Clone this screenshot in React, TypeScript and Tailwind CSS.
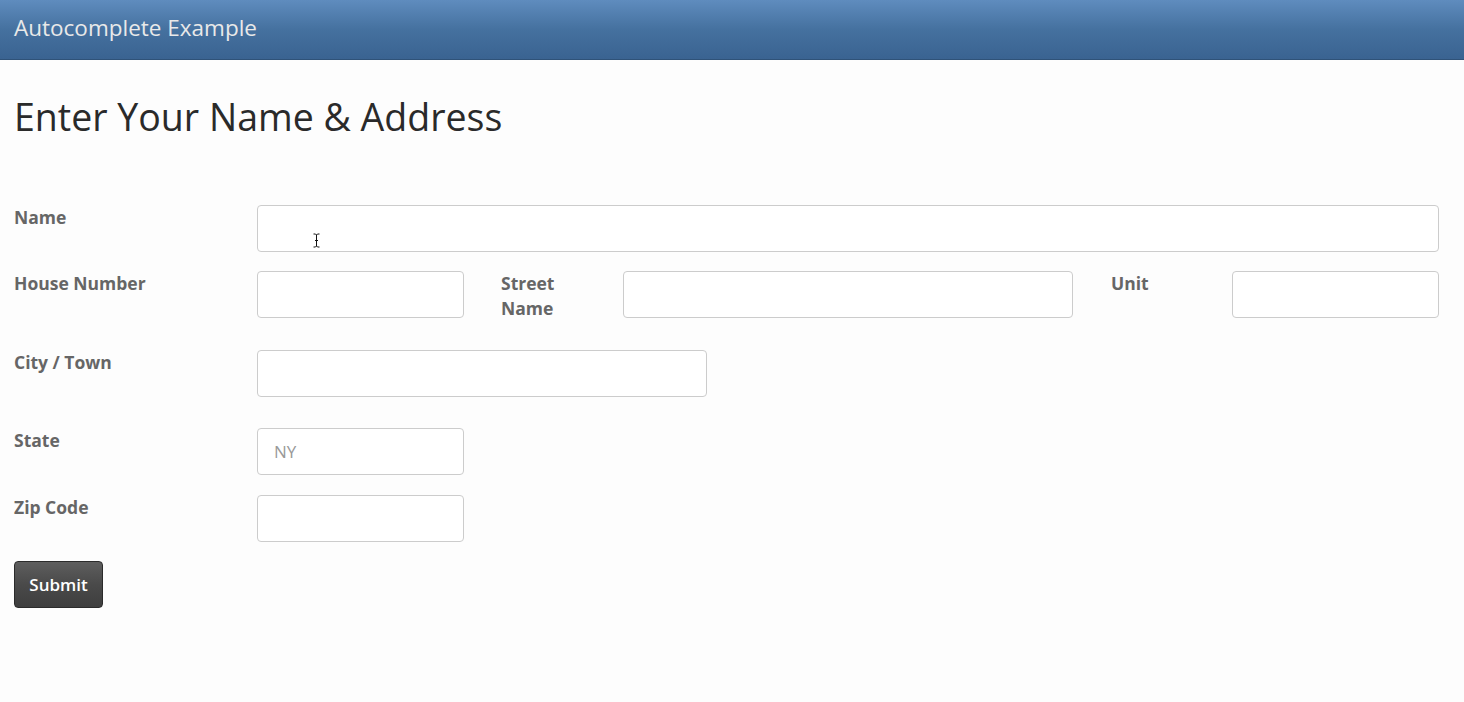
import React from "react";

const inputCls =
  "block h-[47px] rounded-[4px] border border-[#cccccc] bg-white px-4 text-[17px] text-[#555] outline-none placeholder:text-[#999]";
const labelCls = "text-[17.5px] font-bold leading-[25px] text-[#666666]";

export default function App() {
  return (
    <div
      className="min-h-[702px] w-full bg-[#fdfdfd]"
      style={{ fontFamily: '"Open Sans", "Liberation Sans", sans-serif' }}
    >
      <header className="flex h-[60px] items-center border-b border-[#2f5278] bg-gradient-to-b from-[#5f8cbe] via-[#45719f] to-[#3a6391] px-[14px]">
        <span className="text-[22.5px] leading-none text-[#e9e9e9] -mt-[3px]">Autocomplete Example</span>
      </header>

      <main className="px-[14px]">
        <h1 className="mt-[34px] text-[37.5px] font-normal leading-[46px] text-[#2a2a2a]">
          Enter Your Name &amp; Address
        </h1>

        <form className="mt-[65px]" onSubmit={(e) => e.preventDefault()}>
          {/* Name */}
          <div className="flex">
            <label className={`${labelCls} w-[243px] shrink-0`}>Name</label>
            <div className="relative">
              <input className={`${inputCls} w-[1182px]`} />
              <svg
                className="pointer-events-none absolute left-[56px] top-[28px]"
                width="7"
                height="15"
                viewBox="0 0 7 15"
              >
                <path d="M0.5 1 H2.5 L3.5 2 L4.5 1 H6.5 M3.5 2 V13 M0.5 14 H2.5 L3.5 13 L4.5 14 H6.5 M2 7.5 H5" stroke="#111" strokeWidth="1" fill="none" />
              </svg>
            </div>
          </div>

          {/* House / Street / Unit */}
          <div className="mt-[19px] flex">
            <label className={`${labelCls} w-[243px] shrink-0`}>House Number</label>
            <input className={`${inputCls} w-[207px]`} />
            <label className={`${labelCls} ml-[37px] w-[122px] shrink-0`}>
              Street
              <br />
              Name
            </label>
            <input className={`${inputCls} w-[450px]`} />
            <label className={`${labelCls} ml-[38px] w-[121px] shrink-0`}>Unit</label>
            <input className={`${inputCls} w-[207px]`} />
          </div>

          {/* City */}
          <div className="mt-[29px] flex">
            <label className={`${labelCls} w-[243px] shrink-0`}>City / Town</label>
            <input className={`${inputCls} w-[450px]`} />
          </div>

          {/* State */}
          <div className="mt-[31px] flex">
            <label className={`${labelCls} w-[243px] shrink-0`}>State</label>
            <input className={`${inputCls} w-[207px]`} placeholder="NY" />
          </div>

          {/* Zip */}
          <div className="mt-[20px] flex">
            <label className={`${labelCls} w-[243px] shrink-0`}>Zip Code</label>
            <input className={`${inputCls} w-[207px]`} />
          </div>

          <button
            type="submit"
            className="mt-[19px] h-[47px] w-[89px] rounded-[4px] border border-[#2b2b2b] bg-gradient-to-b from-[#5e5e5e] via-[#4a4a4a] to-[#3e3e3e] text-[17px] font-semibold text-white"
          >
            Submit
          </button>
        </form>
      </main>
    </div>
  );
}
